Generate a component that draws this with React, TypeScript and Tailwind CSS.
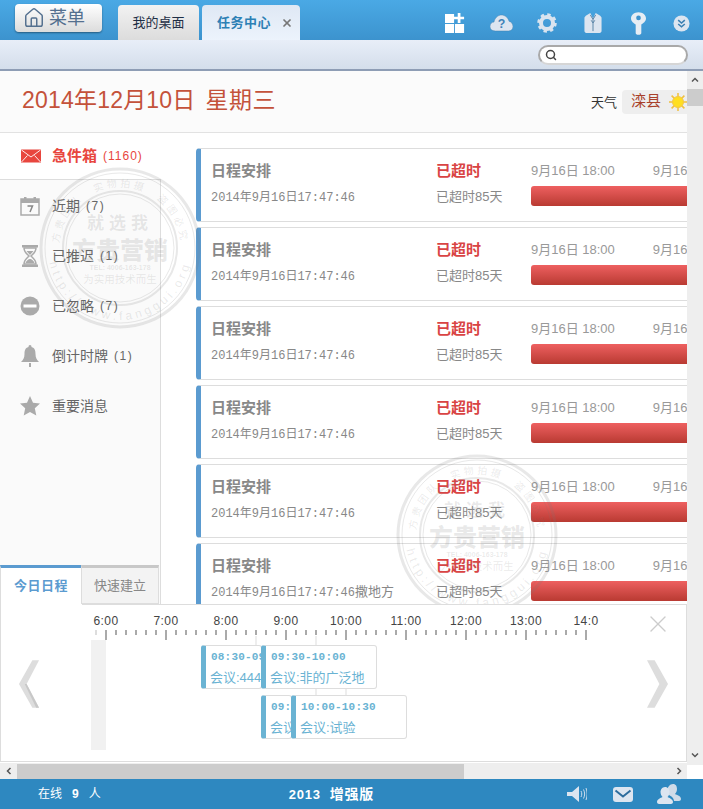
import React from 'react';
import { House, Search, X } from 'lucide-react';

const sans = "font-['Liberation_Sans','Noto_Sans_CJK_SC',sans-serif]";

const hours = ['6:00', '7:00', '8:00', '9:00', '10:00', '11:00', '12:00', '13:00', '14:0'];
const ticks = Array.from({ length: 49 }, (_, i) => i);

const cards = [
  { id: 1 }, { id: 2 }, { id: 3 }, { id: 4 }, { id: 5 }, { id: 6, extra: '撒地方' },
];

const events = [
  { time: '08:30-09:30', title: '会议:444', box: 'left-[201px] top-[645px] w-[61px]' },
  { time: '09:30-10:00', title: '会议:非的广泛地', box: 'left-[261px] top-[645px] w-[116px]' },
  { time: '09:30-10:00', title: '会议:试验', box: 'left-[261px] top-[695px] w-[31px]' },
  { time: '10:00-10:30', title: '会议:试验', box: 'left-[291px] top-[695px] w-[116px]' },
];

function Watermark({ className }: { className: string }) {
  return (
    <svg viewBox="0 0 164 164" className={`absolute w-[164px] h-[164px] pointer-events-none ${className}`}>
      <defs>
        <path id="wm-top" d="M 21 82 a 61 61 0 0 1 122 0" />
        <path id="wm-bottom" d="M 10 82 a 72 72 0 0 0 144 0" />
      </defs>
      <g fill="none" stroke="#777" strokeOpacity="0.17">
        <circle cx="82" cy="82" r="79" strokeWidth="3" />
        <circle cx="82" cy="82" r="75" strokeWidth="1" />
        <circle cx="82" cy="82" r="57" strokeWidth="2" />
        <circle cx="82" cy="82" r="54" strokeWidth="1" />
      </g>
      <g fill="#777" fillOpacity="0.16" className={sans} textAnchor="middle">
        <text x="82" y="63" fontSize="17" fontWeight="700" letterSpacing="5">就选我</text>
        <text x="82" y="93" fontSize="24" fontWeight="900">方贵营销</text>
        <text x="82" y="104" fontSize="7" fontWeight="700">TEL: 4006-163-178</text>
        <text x="82" y="117" fontSize="10.5">为实用技术而生</text>
        <text fontSize="10" letterSpacing="3">
          <textPath href="#wm-top" startOffset="16%">方贵团队</textPath>
        </text>
        <text fontSize="10" letterSpacing="3">
          <textPath href="#wm-top" startOffset="50%">实物拍摄</textPath>
        </text>
        <text fontSize="10" letterSpacing="3">
          <textPath href="#wm-top" startOffset="84%">盗图必究</textPath>
        </text>
        <text fontSize="12" letterSpacing="3.500">
          <textPath href="#wm-bottom" startOffset="50%">http://www.fanggui.org</textPath>
        </text>
      </g>
    </svg>
  );
}

function MailIcon() {
  return (
    <svg viewBox="0 0 20 14" className="w-5 h-[14px]">
      <rect width="20" height="13" y="0.5" fill="#e8463e" />
      <path d="M0.5 1 10 8l9.5-7M0.5 13l6-6.5M19.5 13l-6-6.5" fill="none" stroke="#fff" strokeWidth="0.9" />
    </svg>
  );
}

function CalendarIcon() {
  return (
    <svg viewBox="0 0 20 20" className="w-5 h-5">
      <rect x="1" y="3" width="18" height="16" fill="#fafafa" stroke="#aaa" strokeWidth="1.5" />
      <rect x="1" y="3" width="18" height="4" fill="#aaa" />
      <rect x="4" y="1" width="2.5" height="4" fill="#aaa" />
      <rect x="13.5" y="1" width="2.5" height="4" fill="#aaa" />
      <path d="M7.5 10h5l-2.5 6" fill="none" stroke="#888" strokeWidth="1.5" />
    </svg>
  );
}

function HourglassIcon() {
  return (
    <svg viewBox="0 0 18 22" className="w-[18px] h-[22px]">
      <path d="M1 0h16v2.5H1zM1 19.500h16V22H1z" fill="#aaa" />
      <path d="M3 3h12c0 4-3 6-5 8 2 2 5 4 5 8H3c0-4 3-6 5-8-2-2-5-4-5-8z" fill="#fafafa" stroke="#aaa" strokeWidth="1.500" />
      <path d="M5.500 6h7l-3.500 4zM4.500 18c.5-2 3-4 4.500-4s4 2 4.500 4z" fill="#aaa" />
    </svg>
  );
}

function BlockIcon() {
  return (
    <svg viewBox="0 0 20 20" className="w-5 h-5">
      <circle cx="10" cy="10" r="9.500" fill="#aaa" />
      <rect x="3.500" y="8.500" width="13" height="3" fill="#fff" />
    </svg>
  );
}

function BellIcon() {
  return (
    <svg viewBox="0 0 20 22" className="w-5 h-[22px]">
      <path d="M10 0c1 0 1.500.8 1.500 2C15 3 15.500 6 15.500 9c0 4 1.500 6 3.500 8H1c2-2 3.500-4 3.500-8 0-3 .5-6 4-7C8.500.8 9 0 10 0z" fill="#aaa" />
      <rect x="9" y="18" width="2" height="4" fill="#aaa" />
    </svg>
  );
}

function StarIcon() {
  return (
    <svg viewBox="0 0 20 20" className="w-5 h-5">
      <path d="M10 0l3 6.800 7 .8-5.200 4.700 1.500 7.200L10 16l-6.300 3.500 1.500-7.200L0 7.600l7-.8z" fill="#aaa" />
    </svg>
  );
}

const navItems = [
  { label: '近期', count: '(7)', icon: <CalendarIcon /> },
  { label: '已推迟', count: '(1)', icon: <HourglassIcon /> },
  { label: '已忽略', count: '(7)', icon: <BlockIcon /> },
  { label: '倒计时牌', count: '(1)', icon: <BellIcon /> },
  { label: '重要消息', count: '', icon: <StarIcon /> },
];

function TopIcons() {
  return (
    <div className="ml-auto flex items-center h-full pt-[6px]">
      <svg viewBox="0 0 22 22" className="w-5 h-5">
        <path d="M0 1h10v10H0zM0 12h10v10H0zM11 12h10v10H11zM14 0h3v4h4v3h-4v4h-3V7h-4V4h4z" fill="#fff" />
      </svg>
      <svg viewBox="0 0 26 20" className="w-[23px] h-[18px] ml-[25px]">
        <path d="M6 19C2 19 0 17 0 14c0-3 2-5 4.500-5C5.500 4 9 1 13 1s7.500 3 8.500 7C24 8.500 26 11 26 14c0 3-2 5-5 5z" fill="#dce5f0" stroke="#3f7dac" strokeWidth="0.5" />
        <text x="13" y="16" textAnchor="middle" fontSize="14" fontWeight="700" fill="#3f83b8" className={sans}>?</text>
      </svg>
      <svg viewBox="0 0 20 20" className="w-5 h-5 ml-[24px]">
        <circle cx="10" cy="10" r="6" fill="none" stroke="#d9e4ef" strokeWidth="4" />
        <circle cx="10" cy="10" r="8" fill="none" stroke="#d9e4ef" strokeWidth="3.500" strokeDasharray="3.200 3.080" />
      </svg>
      <svg viewBox="0 0 20 24" className="w-[18px] h-[22px] ml-[27px]">
        <path d="M2 4l5-3 3 6 3-6 5 3 1.500 2v15c0 1-1 2-2 2H2.500c-1 0-2-1-2-2V6z" fill="#dce5f0" />
        <path d="M7 3l3 5 3-5M10 8v13M8 9l2 3 2-3" fill="none" stroke="#5c86a8" strokeWidth="1.100" />
      </svg>
      <svg viewBox="0 0 16 24" className="w-[15px] h-[23px] ml-[29px]">
        <path d="M8 0c4.500 0 8 3 8 6.500S13 12 11 13v9c0 1-1 2-3 2s-3-1-3-2v-9C3 12 0 10 0 6.500S3.500 0 8 0z" fill="#e6edf4" />
        <circle cx="8" cy="6" r="2.500" fill="#3f93cd" />
      </svg>
      <svg viewBox="0 0 18 18" className="w-[17px] h-[17px] ml-[27px]">
        <circle cx="9" cy="9" r="8.500" fill="#dce5f0" />
        <path d="M5.500 5.500 9 8.500l3.500-3M5.500 9.500 9 12.500l3.500-3" fill="none" stroke="#3a7fb2" strokeWidth="1.600" />
      </svg>
    </div>
  );
}

function Card({ extra }: { extra?: string }) {
  return (
    <div className="flex shrink-0 w-[520px] h-[74px] border-y border-[#dddddd] border-l-[5px] border-l-[#5b9bd0] rounded-l-[4px]">
      <div className="w-[235px] pl-[10px] pt-[12px] shrink-0">
        <div className="text-[15px] leading-[20px] font-bold text-[#888888]">日程安排</div>
        <div className="mt-[9px] font-['Liberation_Mono','Noto_Sans_CJK_SC',monospace] text-[12px] leading-[16px] text-[#888888] whitespace-nowrap">
          2014年9月16日17:47:46{extra && <span className="text-[13px]">{extra}</span>}
        </div>
      </div>
      <div className="w-[95px] pt-[12px] shrink-0">
        <div className="text-[15px] leading-[20px] font-bold text-[#d94444]">已超时</div>
        <div className="mt-[7px] text-[13px] leading-[18px] text-[#888888] whitespace-nowrap">已超时85天</div>
      </div>
      <div className="flex-1 pt-[13px]">
        <div className="flex gap-[38px] text-[13px] leading-[18px] text-[#999999] whitespace-nowrap">
          <span>9月16日 18:00</span>
          <span>9月16日 18:00</span>
        </div>
        <div className="mt-[6px] h-5 w-full rounded-l-[3px] bg-gradient-to-b from-[#ee6060] to-[#b93a32]" />
      </div>
    </div>
  );
}

export default function App() {
  return (
    <div className={`relative w-[703px] h-[809px] overflow-hidden flex flex-col bg-white ${sans}`}>
      {/* top bar */}
      <div className="h-10 shrink-0 flex bg-gradient-to-b from-[#4aa9e5] to-[#3c93ce] pl-[15px] pr-[13px]">
        <button className="mt-1 w-[87px] h-7 flex items-center justify-start pl-[8px] gap-[4px] rounded-[4px] bg-gradient-to-b from-white to-[#dcdcdc] shadow-[0_1px_2px_rgba(0,0,0,0.4)] text-[#54708f] text-[18px]">
          <House className="w-[22px] h-[22px]" strokeWidth={1.6} />
          菜单
        </button>
        <div className="ml-4 mt-[5px] w-[81px] h-[35px] flex items-center justify-center rounded-t-[4px] bg-gradient-to-b from-[#f2f2f2] to-[#dcdcdc] text-[13px] text-[#1f2f45]">
          我的桌面
        </div>
        <div className="ml-[3px] mt-[5px] w-[98px] h-[35px] flex items-center pl-[15px] gap-[10px] rounded-t-[4px] bg-gradient-to-b from-[#dfe8f4] to-[#ecf3fc] text-[13px] tracking-[0.5px] font-bold text-[#2d80b5]">
          任务中心
          <X className="w-3 h-3 text-[#777777]" strokeWidth={3.5} />
        </div>
        <TopIcons />
      </div>

      {/* search bar */}
      <div className="h-[31px] shrink-0 flex items-start justify-end pt-[5px] pr-[15px] bg-gradient-to-b from-[#e8eef8] to-[#d4deeb] border-b-2 border-[#8e9db5]">
        <div className="w-[150px] h-5 flex items-center pl-[5px] rounded-full bg-white border-2 border-[#a9a9a9] border-b-[#d6d6d6]">
          <Search className="w-3 h-3 text-[#444444]" strokeWidth={3} />
        </div>
      </div>

      {/* main with vertical scrollbar */}
      <div className="flex-1 min-h-0 flex">
        <div className="flex-1 min-w-0 flex flex-col">
          <div className="h-[62px] shrink-0 flex items-center pl-[22px] bg-[#fbfbfb] border-b border-[#e2e2e2]">
            <div className="pb-[3px] text-[23px] tracking-[0.2px] text-[#c4523a] leading-[28px] whitespace-nowrap">2014年12月10日</div>
            <div className="pb-[3px] ml-[10px] text-[23px] tracking-[0.5px] text-[#c4523a] leading-[28px]">星期三</div>
            <div className="ml-auto pt-[2px] text-[13px] text-[#333333]">天气</div>
            <div className="ml-[5px] w-[65px] h-6 flex items-center pl-[9px] rounded-l-[4px] bg-[#eeeeee] text-[15px] text-[#a8402a]">
              滦县
              <svg viewBox="0 0 18 18" className="w-[18px] h-[18px] ml-auto">
                <g stroke="#f0c040" strokeWidth="1.500">
                  <path d="M9 0v18M0 9h18M2.600 2.600l12.800 12.800M15.400 2.600 2.600 15.400" />
                </g>
                <circle cx="9" cy="9" r="5.500" fill="#ffdf20" stroke="#f3c64a" />
              </svg>
            </div>
          </div>

          <div className="relative flex-1 min-h-0 flex overflow-hidden">
            {/* sidebar */}
            <div className="w-[161px] shrink-0 flex flex-col">
              <div className="h-[47px] shrink-0 flex items-center pl-[21px] border-b border-[#dddddd]">
                <MailIcon />
                <span className="ml-[11px] text-[15px] font-bold text-[#e8463e]">急件箱</span>
                <span className="ml-[6px] text-[12px] text-[#e8463e] tracking-[1px]">(1160)</span>
              </div>
              <div className="flex-1 flex flex-col bg-[#fafafa] border-r border-[#dddddd]">
                <div className="pt-[1px]">
                  {navItems.map((item) => (
                    <div key={item.label} className="h-[50px] flex items-center">
                      <div className="w-[52px] pl-[10px] pr-[2px] flex justify-center">{item.icon}</div>
                      <span className="text-[14px] text-[#666666]">{item.label}</span>
                      {item.count && <span className="ml-[6px] text-[12px] tracking-[1.5px] text-[#666666]">{item.count}</span>}
                    </div>
                  ))}
                </div>
                <div className="mt-auto flex h-[39px] pr-px">
                  <div className="w-[81px] flex items-center justify-center border-t-[3px] border-t-[#5b9bd0] border-l border-[#dddddd] bg-white text-[13px] tracking-[0.5px] font-bold text-[#5b9bd0]">
                    今日日程
                  </div>
                  <div className="flex-1 flex items-center justify-center border-t-[3px] border-t-[#c8c8c8] border-x border-b border-[#dddddd] bg-[#f3f3f3] text-[13px] text-[#888888]">
                    快速建立
                  </div>
                </div>
              </div>
            </div>

            {/* task cards */}
            <div className="flex-1 min-w-0 overflow-hidden flex flex-col gap-[5px] pt-[15px] pl-[35px]">
              {cards.map((c) => (
                <Card key={c.id} extra={c.extra} />
              ))}
            </div>

            <Watermark className="left-[38px] top-[33px]" />
            <Watermark className="left-[395px] top-[320px]" />
          </div>

          {/* timeline panel */}
          <div className="h-[158px] shrink-0 flex flex-col border-x border-b border-[#dddddd]">
            <div className="flex shrink-0 h-px">
              <div className="w-[81px]" />
              <div className="flex-1 bg-[#dddddd]" />
            </div>
            <div className="flex-1" />
          </div>

          {/* horizontal scrollbar */}
          <div className="h-[17px] shrink-0 flex items-center bg-[#eeeeee] border-t border-white">
            <svg viewBox="0 0 8 10" className="w-[6px] h-2 ml-[6px] shrink-0">
              <path d="M6 1 2 5l4 4" fill="none" stroke="#555" strokeWidth="2" />
            </svg>
            <div className="ml-[5px] w-[447px] h-[15px] bg-[#cccccc]" />
            <svg viewBox="0 0 8 10" className="w-[6px] h-2 ml-auto mr-[5px] shrink-0">
              <path d="M2 1l4 4-4 4" fill="none" stroke="#555" strokeWidth="2" />
            </svg>
          </div>
        </div>

        <div className="w-4 shrink-0 flex flex-col bg-[#eeeeee]">
          <div className="h-[18px] flex items-center justify-center">
            <svg viewBox="0 0 10 8" className="w-2 h-[6px]">
              <path d="M1 6l4-4 4 4" fill="none" stroke="#555" strokeWidth="2" />
            </svg>
          </div>
          <div className="h-[17px] bg-[#cccccc]" />
          <div className="mt-[646px] h-[6px] flex items-center justify-center">
            <svg viewBox="0 0 10 8" className="w-2 h-[6px]">
              <path d="M1 2l4 4 4-4" fill="none" stroke="#555" strokeWidth="2" />
            </svg>
          </div>
          <div className="flex-1 bg-white mt-[7px]" />
        </div>
      </div>

      {/* footer */}
      <div className="h-[30px] shrink-0 flex items-center pl-[38px] pr-[22px] bg-[#2e88c0] text-white text-[12px]">
        <span>在线</span>
        <span className="ml-[10px] font-bold">9</span>
        <span className="ml-[10px]">人</span>
        <span className="ml-[188px] font-bold text-[13px] tracking-[0.8px] whitespace-nowrap">
          2013&nbsp; <span className="text-[14px]">增强版</span>
        </span>
        <svg viewBox="0 0 20 16" className="w-5 h-4 ml-auto">
          <path d="M0 6h5l7-6v16l-7-6H0z" fill="#dce5f0" />
          <path d="M14 5c1 2 1 4 0 6M16.500 3.500c1.500 3 1.500 6 0 9M19 2c1.500 4 1.500 8 0 12" fill="none" stroke="#dce5f0" strokeWidth="0.900" />
        </svg>
        <svg viewBox="0 0 20 15" className="w-5 h-[15px] ml-[26px]">
          <rect width="20" height="15" rx="3" fill="#dce5f0" />
          <path d="M2.500 3.500 10 9.500l7.500-6" fill="none" stroke="#2c6c9d" strokeWidth="2" />
        </svg>
        <svg viewBox="0 0 24 20" className="w-6 h-5 ml-[24px]">
          <path d="M16 0c3 0 4 2.500 4 5 0 2-1 4-2 5 2 1 6 2 6 5 0 1-1 2-2 2h-5c0-3-3-5-5-6-.5-1-1.500-3-1.500-5 0-3 2.500-6 5.500-6z" fill="#cfdbe8" />
          <path d="M8 3c3 0 4.500 2.500 4.500 5s-1 4-2 5c2 1 5.500 2.500 5.500 5 0 1-1 2-2 2H2c-1 0-2-1-2-2 0-2.500 3.500-4 5.500-5-1-1-2-3-2-5s1.500-5 4.500-5z" fill="#dce5f0" />
        </svg>
      </div>

      {/* timeline canvas, lies over the panel frame */}
      <div className="absolute inset-0 pointer-events-none">
        <svg viewBox="0 0 22 50" className="absolute left-[19px] top-[660px] w-[21px] h-[48px]">
          <path d="M21 0h-7L0 25l14 25h7L8 25z" fill="#dddddd" />
          <path d="M8 25l13 25h-3L6 25z" fill="#c8c8c8" />
        </svg>
        <svg viewBox="0 0 22 50" className="absolute left-[647px] top-[660px] w-[21px] h-[48px]">
          <path d="M0 0h8l14 25-14 25H0l13-25z" fill="#dddddd" />
        </svg>
        <X className="absolute left-[644px] top-[610px] w-7 h-7 text-[#cccccc]" strokeWidth={1.2} />

        {hours.map((h, i) => (
          <span
            key={h}
            className="absolute top-[613px] -translate-x-1/2 text-[12px] leading-4 text-[#444444] tracking-[0.4px]"
            style={{ left: 106 + i * 60 }}
          >
            {h}
          </span>
        ))}

        <div className="absolute left-[95px] top-[630px] flex items-start">
          <div className="w-[2px] h-[5px] bg-[#dddddd] mr-[8px]" />
          {ticks.map((t) => (
            <div key={t} className="w-[10px] shrink-0">
              <div className={t % 6 === 0 ? 'w-[2px] h-[10px] bg-[#aaaaaa]' : 'w-[2px] h-[5px] bg-[#aaaaaa]'} />
            </div>
          ))}
        </div>

        <div className="absolute left-[91px] top-[640px] w-[15px] h-[110px] bg-[#f1f1f1]" />
        <div className="absolute left-[255px] top-[636px] w-[2px] h-[9px] bg-[#eeeeee]" />
        <div className="absolute left-[315px] top-[636px] w-[2px] h-[9px] bg-[#eeeeee]" />
        <div className="absolute left-[315px] top-[689px] w-[2px] h-[6px] bg-[#eeeeee]" />
        <div className="absolute left-[345px] top-[689px] w-[2px] h-[6px] bg-[#eeeeee]" />

        {events.map((e) => (
          <div
            key={e.box}
            className={`absolute h-[44px] overflow-hidden bg-white rounded-[3px] border border-[#dddddd] border-l-[5px] border-l-[#6ab3d3] pl-[4px] pt-[3px] whitespace-nowrap text-[#6ab3d3] ${e.box}`}
          >
            <div className="pl-px font-['Liberation_Mono',monospace] text-[11px] leading-[16px] font-bold tracking-[0.2px]">{e.time}</div>
            <div className="mt-[4px] text-[13px] leading-[18px]">{e.title}</div>
          </div>
        ))}
      </div>
    </div>
  );
}
